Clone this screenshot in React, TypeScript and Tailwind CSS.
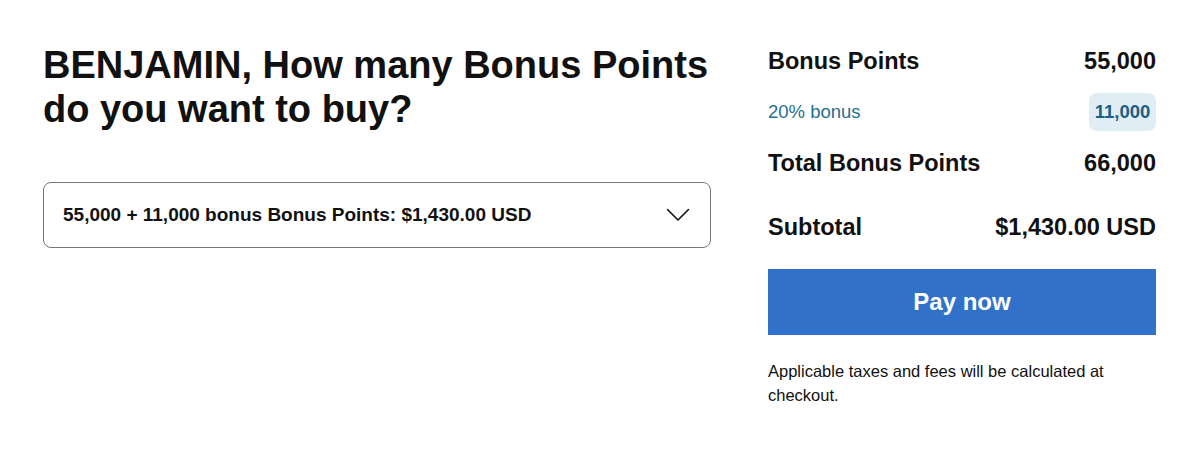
import React from "react";

export default function App() {
  return (
    <div className="w-[1200px] h-[449px] bg-white text-[#111] flex" style={{ fontFamily: '"Liberation Sans", Arial, sans-serif' }}>
      <div className="w-[668px] ml-[43px] pt-[43px]">
        <h1 className="text-[38px] leading-[44px] font-bold text-[#111]">
          BENJAMIN, How many Bonus Points do you want to buy?
        </h1>
        <div className="mt-[51px] h-[66px] border border-[#777] rounded-[8px] flex items-center justify-between pl-[19px] pr-[20px]">
          <span className="text-[19px] font-bold">55,000 + 11,000 bonus Bonus Points: $1,430.00 USD</span>
          <svg width="24" height="14" viewBox="0 0 24 14" fill="none" stroke="#111" strokeWidth="1.6" strokeLinecap="round" strokeLinejoin="round">
            <path d="M1.5 1.5 L12 12 L22.5 1.5" />
          </svg>
        </div>
      </div>
      <div className="w-[388px] ml-[57px] pt-[46px]">
        <div className="flex justify-between items-center h-[32px] text-[23.5px] font-bold">
          <span>Bonus Points</span>
          <span>55,000</span>
        </div>
        <div className="flex justify-between items-center mt-[15px] h-[38px]">
          <span className="text-[18.5px] text-[#256f8f]">20% bonus</span>
          <span className="h-[38px] w-[67px] flex items-center justify-center rounded-[8px] bg-[#e1edf5] text-[18.5px] font-bold text-[#1c5f80]">11,000</span>
        </div>
        <div className="flex justify-between items-center mt-[17px] h-[32px] text-[23.5px] font-bold">
          <span>Total Bonus Points</span>
          <span>66,000</span>
        </div>
        <div className="flex justify-between items-center mt-[32px] h-[32px] text-[23.5px] font-bold">
          <span>Subtotal</span>
          <span>$1,430.00 USD</span>
        </div>
        <button className="mt-[25px] w-full h-[66px] bg-[#3171c9] text-white text-[24px] font-bold flex items-center justify-center">
          Pay now
        </button>
        <p className="mt-[24px] text-[16.5px] leading-[24px] text-[#111] w-[370px]">
          Applicable taxes and fees will be calculated at checkout.
        </p>
      </div>
    </div>
  );
}
